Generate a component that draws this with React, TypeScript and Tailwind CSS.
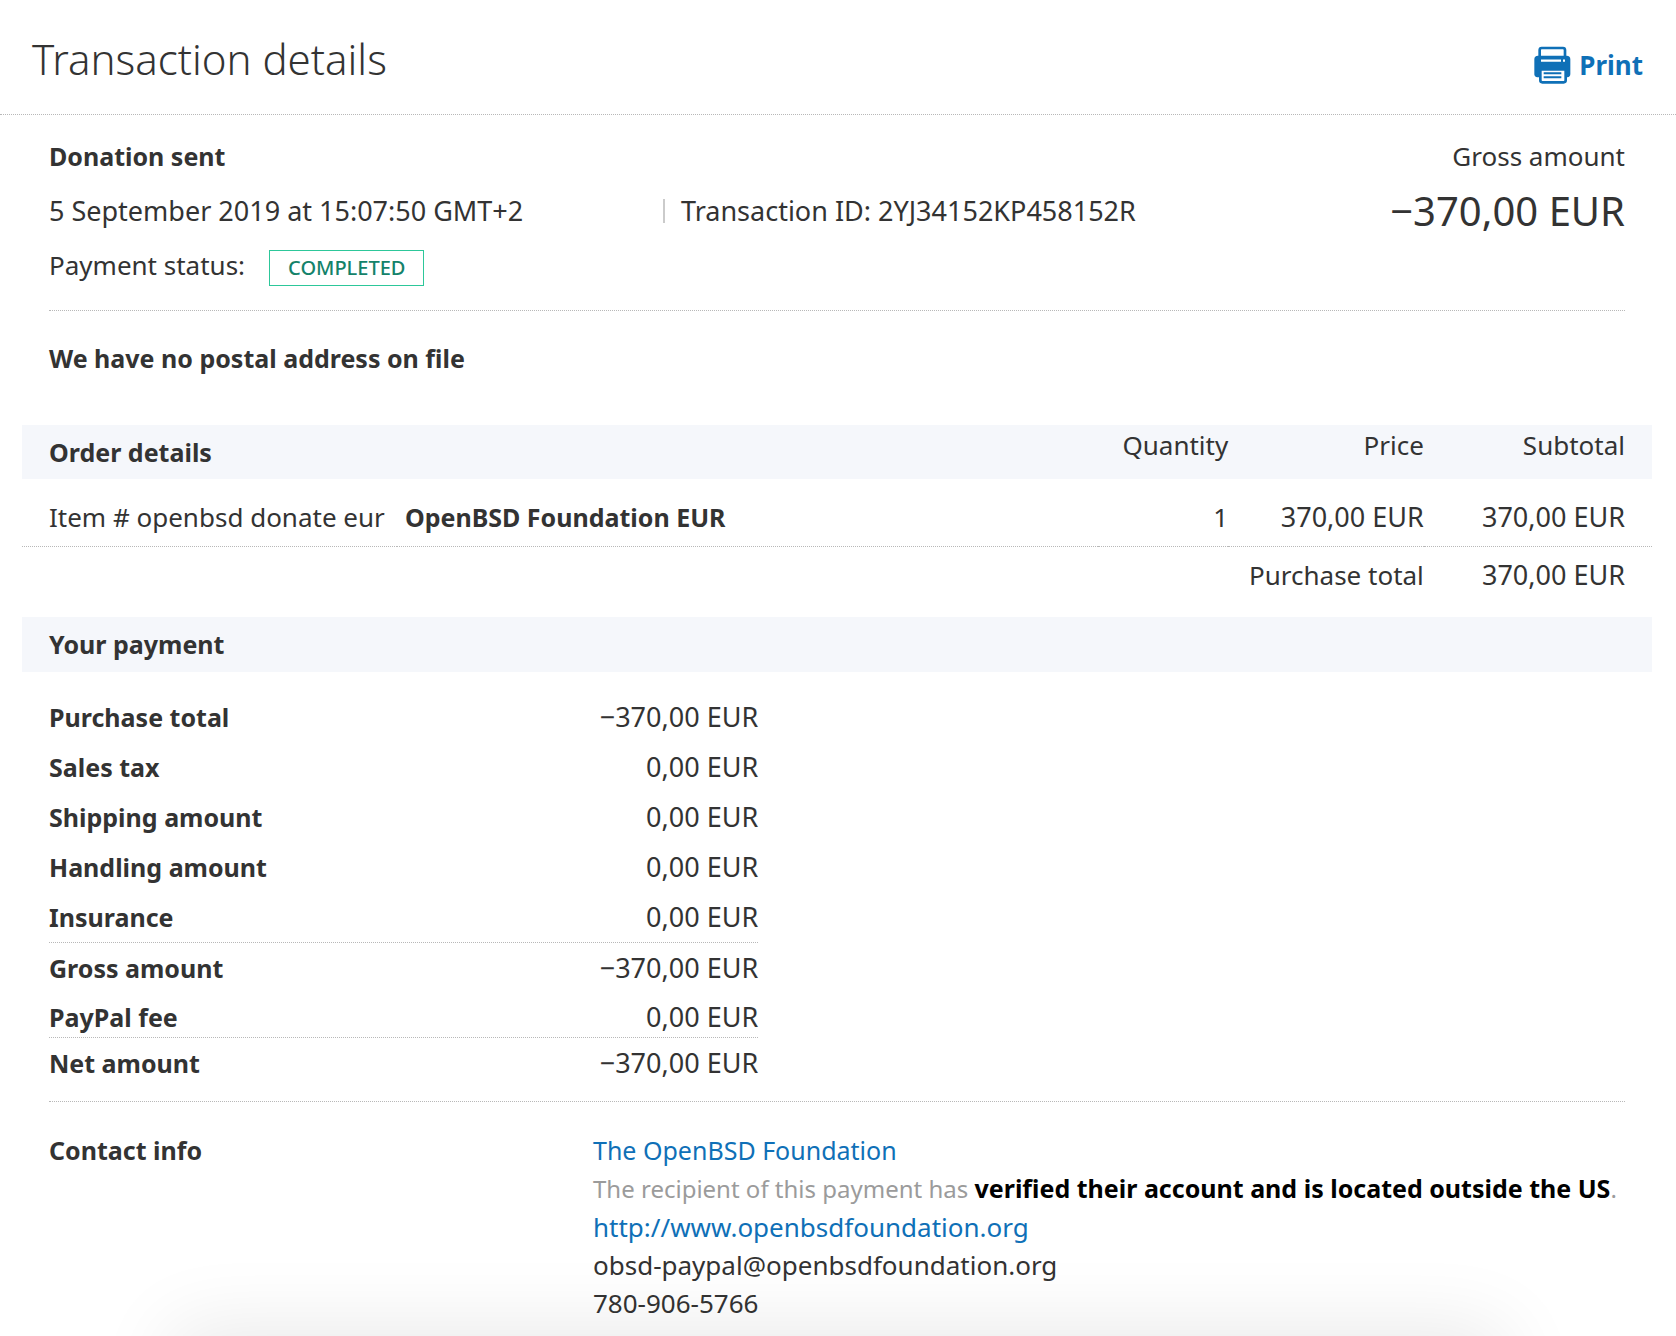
type PaymentLine = { label: string; amount: string; divider?: boolean; tight?: boolean };

const paymentLines: PaymentLine[] = [
  { label: "Purchase total", amount: "−370,00 EUR" },
  { label: "Sales tax", amount: "0,00 EUR" },
  { label: "Shipping amount", amount: "0,00 EUR" },
  { label: "Handling amount", amount: "0,00 EUR" },
  { label: "Insurance", amount: "0,00 EUR", divider: true },
  { label: "Gross amount", amount: "−370,00 EUR" },
  { label: "PayPal fee", amount: "0,00 EUR", divider: true, tight: true },
  { label: "Net amount", amount: "−370,00 EUR" },
];

function PrinterIcon() {
  return (
    <svg viewBox="0 0 111 114" className="h-[38px] w-[37px]" aria-hidden="true">
      <path d="M17 34V12a6 6 0 0 1 6-6h64a6 6 0 0 1 6 6v22" fill="none" stroke="currentColor" strokeWidth="8" />
      <path
        d="M12 29h86a11 11 0 0 1 11 11v44a10 10 0 0 1-9 10H10a9 9 0 0 1-9-10V40a11 11 0 0 1 11-11z"
        fill="currentColor"
      />
      <path d="M21 44h60M87 44h6" stroke="#fff" strokeWidth="7" />
      <path
        d="M17 70h78v33a6 6 0 0 1-6 6H25a6 6 0 0 1-6-6V70"
        fill="#fff"
        stroke="currentColor"
        strokeWidth="8"
      />
      <path d="M29 82h53M29 94h53" stroke="currentColor" strokeWidth="6" />
    </svg>
  );
}

function Header() {
  return (
    <header className="flex items-start justify-between border-b border-dotted border-[#b8b8b8] pt-[31px] pr-[33px] pb-[27px] pl-8">
      <h1 className="text-[42px] leading-[56px] font-light">Transaction details</h1>
      <button type="button" className="mt-[15px] flex items-center gap-2 text-[26px] leading-[34px] font-bold text-[#0f70b7]">
        <PrinterIcon />
        Print
      </button>
    </header>
  );
}

function Summary() {
  return (
    <section className="mx-[27px] flex justify-between border-b border-dotted border-[#b8b8b8] pt-[14px] pb-[18px] leading-[54px]">
      <div className="grow">
        <h2 className="text-[25px] font-bold">Donation sent</h2>
        <div className="flex items-center text-[27px] leading-[55px]">
          <p className="w-[614px]">5 September 2019 at 15:07:50 GMT+2</p>
          <span className="h-6 w-0.5 bg-[#cbcbcb]" />
          <p className="pl-4">Transaction ID: 2YJ34152KP458152R</p>
        </div>
        <p className="flex items-baseline gap-6">
          Payment status:
          <span className="border border-[#2dc79a] px-[18px] text-xl leading-[34px] font-medium text-[#14826a]">COMPLETED</span>
        </p>
      </div>
      <div className="text-right">
        <p>Gross amount</p>
        <p className="text-[40px] leading-[56px]">−370,00 EUR</p>
      </div>
    </section>
  );
}

function OrderTable() {
  return (
    <table className="w-full table-fixed border-separate border-spacing-0 text-right leading-9">
      <colgroup>
        <col className="w-[23%]" />
        <col />
        <col className="w-[8%]" />
        <col className="w-[12%]" />
        <col className="w-[14%]" />
      </colgroup>
      <thead>
        <tr className="bg-[#f5f7fb] leading-10">
          <th colSpan={2} scope="col" className="pl-[27px] text-left text-[25px] leading-[54px] font-bold">Order details</th>
          <th scope="col" className="align-top font-normal">Quantity</th>
          <th scope="col" className="align-top font-normal">Price</th>
          <th scope="col" className="pr-[27px] align-top font-normal">Subtotal</th>
        </tr>
      </thead>
      <tbody>
        <tr className="[&>td]:border-b [&>td]:border-dotted [&>td]:border-[#b8b8b8] [&>td]:pt-5 [&>td]:pb-[11px]">
          <td className="pl-[27px] text-left whitespace-nowrap">Item # openbsd donate eur</td>
          <td className="pl-2 text-left text-[25px] font-bold">OpenBSD Foundation EUR</td>
          <td>1</td>
          <td className="text-[27px]">370,00 EUR</td>
          <td className="pr-[27px] text-[27px]">370,00 EUR</td>
        </tr>
        <tr>
          <td colSpan={4} className="pt-2.5 pb-6">Purchase total</td>
          <td className="pt-2.5 pr-[27px] pb-6 text-[27px]">370,00 EUR</td>
        </tr>
      </tbody>
    </table>
  );
}

function Payment() {
  return (
    <section>
      <h2 className="bg-[#f5f7fb] pl-[27px] text-[25px] leading-[55px] font-bold">Your payment</h2>
      <div className="mx-[27px] border-b border-dotted border-[#b8b8b8] pt-5 pb-[13px]">
        <dl className="w-[45%]">
          {paymentLines.map((line) => (
            <div
              key={line.label}
              className={
                "flex justify-between border-[#b8b8b8] " +
                (line.divider ? "border-b border-dotted " : "") +
                (line.tight ? "pt-1 leading-10" : "leading-[50px]")
              }
            >
              <dt className="text-[25px] font-bold">{line.label}</dt>
              <dd className="text-[27px]">{line.amount}</dd>
            </div>
          ))}
        </dl>
      </div>
    </section>
  );
}

function Contact() {
  return (
    <section className="mx-[27px] flex pt-[29px] leading-[38px]">
      <h2 className="w-[544px] shrink-0 text-[25px] font-bold">Contact info</h2>
      <address className="not-italic">
        <a href="#foundation" className="block text-[25px] text-[#0f70b7]">The OpenBSD Foundation</a>
        <p className="text-2xl leading-[38px] text-[#9b9b9b]">
          The recipient of this payment has{" "}
          <strong className="text-[25px] font-bold text-black">verified their account and is located outside the US</strong>.
        </p>
        <a href="http://www.openbsdfoundation.org" className="block text-[#0f70b7]">http://www.openbsdfoundation.org</a>
        <p>obsd-paypal@openbsdfoundation.org</p>
        <p>780-906-5766</p>
      </address>
    </section>
  );
}

export default function App() {
  return (
    <div className="relative min-h-screen overflow-hidden bg-white pb-3 font-['Noto_Sans',sans-serif] text-[26px] text-[#333]">
      <Header />
      <main className="mr-6 ml-[22px]">
        <Summary />
        <h2 className="px-[27px] pt-[29px] pb-[49px] text-[25px] leading-9 font-bold">We have no postal address on file</h2>
        <OrderTable />
        <Payment />
        <Contact />
      </main>
      <div className="pointer-events-none absolute inset-x-[180px] top-full h-24 shadow-[0_0_80px_8px_rgba(0,0,0,0.09)]" />
    </div>
  );
}
